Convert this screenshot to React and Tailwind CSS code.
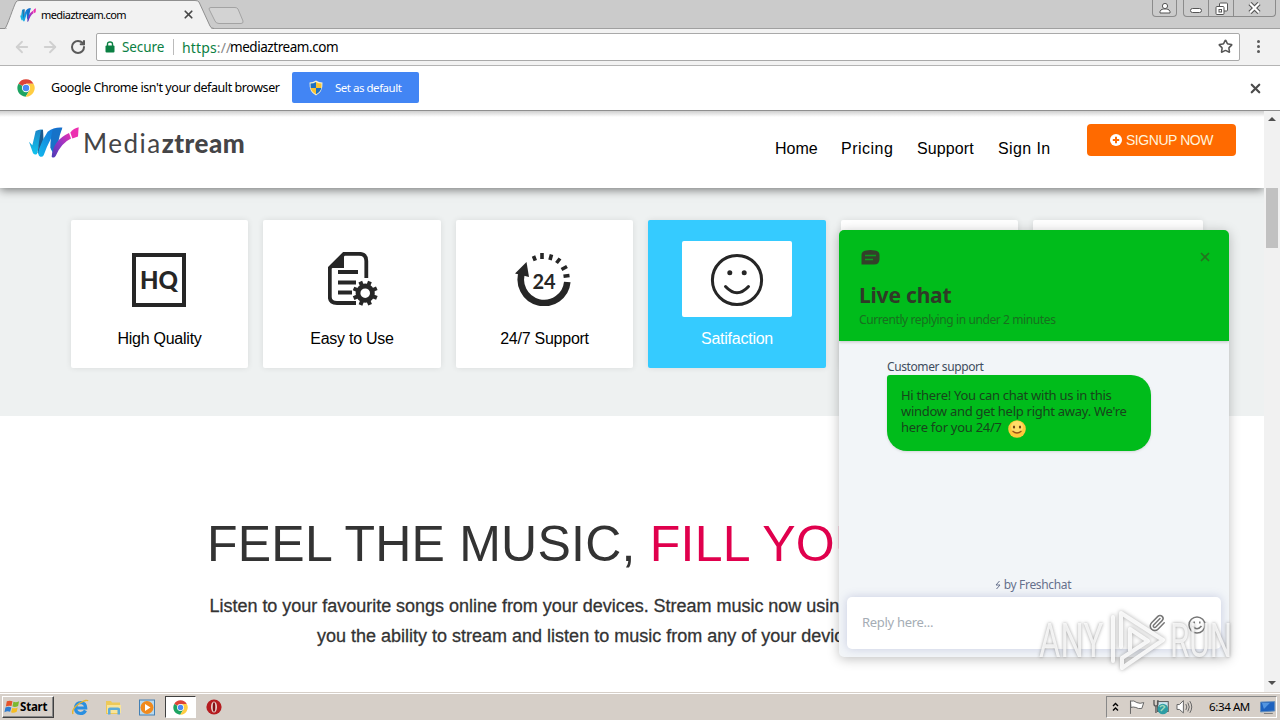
import React from 'react';
import { ArrowLeft, ArrowRight, RotateCw, Star, X, Paperclip } from 'lucide-react';

const ui = "font-['Noto_Sans','Open_Sans',sans-serif]";

function ChromeLogo({ size }) {
  return (
    <svg width={size} height={size} viewBox="0 0 48 48">
      <circle cx="24" cy="24" r="23" fill="#fff" />
      <path d="M24 24 L4 12.5 A23 23 0 0 1 44 12.5 L24 12.5 Z" fill="#dd4437" />
      <path d="M24 24 L4 12.5 A23 23 0 0 0 23 47 L34 29.5 Z" fill="#1da462" />
      <path d="M24 12.5 L44 12.5 A23 23 0 0 1 23 47 L34 29.5 Z" fill="#ffcd42" />
      <circle cx="24" cy="24" r="11" fill="#fff" />
      <circle cx="24" cy="24" r="8.6" fill="#4a8af4" />
    </svg>
  );
}

function BrandMark({ width, height }) {
  return (
    <svg width={width} height={height} viewBox="0 0 150 92" preserveAspectRatio="none">
      <defs>
        <linearGradient id="markCyan" x1="0" y1="0" x2="0" y2="1">
          <stop offset="0" stopColor="#1c86c8" />
          <stop offset="1" stopColor="#10c4ee" />
        </linearGradient>
        <linearGradient id="markBlue" x1="1" y1="0" x2="0" y2="1">
          <stop offset="0" stopColor="#1464d2" />
          <stop offset="1" stopColor="#12b8ee" />
        </linearGradient>
        <linearGradient id="markPink" x1="0" y1="1" x2="1" y2="0">
          <stop offset="0" stopColor="#4a3cb4" />
          <stop offset="0.5" stopColor="#9036c4" />
          <stop offset="1" stopColor="#ec30b0" />
        </linearGradient>
      </defs>
      <path d="M0 44 L10 54 Q16 30 20 12 Q30 6 42 8 Q34 40 24 80 Q14 86 10 72 Z" fill="url(#markCyan)" />
      <path d="M42 8 L44 44 L34 86 L26 76 Q30 40 36 10 Z" fill="#1b5a8e" />
      <path d="M34 88 Q24 84 30 66 Q40 36 56 14 Q76 0 100 2 Q84 30 72 78 L66 66 L66 34 Q52 60 44 84 Q40 90 34 88 Z" fill="url(#markBlue)" />
      <path d="M72 6 L100 2 Q92 22 88 44 L74 76 L64 62 Q64 30 72 6 Z" fill="#1672c8" />
      <path d="M68 88 Q72 40 120 18 L126 34 Q96 48 80 86 Q74 94 68 88 Z" fill="url(#markPink)" />
      <path d="M124 16 Q134 4 149 1 L147 28 L130 34 Z" fill="#ec2fb0" />
    </svg>
  );
}

function TabStrip() {
  return (
    <div className="relative flex h-[29px] shrink-0 items-center border-b border-[#a0a0a0] bg-[#cbcbcb]">
      <svg className="absolute left-0 top-0" width="250" height="29">
        <path d="M0 28.5 H5 C7 27 14 5 16 2 Q17 .5 19 .5 H195 Q198 .5 199 2 L210 26 Q211 28.5 214 28.5" fill="#f2f2f2" stroke="#8f8f8f" />
        <rect x="7" y="28" width="204" height="1" fill="#f2f2f2" />
        <path d="M209 9 Q209 7.5 211 7.5 H235 Q237 7.5 238 9 L243 21 Q243.500 23.500 241 23.500 H219 Q216 23.500 215 21 Z" fill="#d3d3d3" stroke="#a3a3a3" />
      </svg>
      <div className="relative ml-[20px] mt-px flex w-[175px] items-center">
        <BrandMark width={16} height={14} />
        <span className={`${ui} ml-[5px] text-[11px] leading-4 tracking-[-0.57px] text-black`}>mediaztream.com</span>
        <X size={13} strokeWidth={3.2} className="ml-auto text-[#484848]" />
      </div>
      <div className="ml-auto flex h-[17px] self-start">
        <div className="flex w-[25px] items-center justify-center rounded-b border border-t-0 border-[#8b8b8b]">
          <svg width="12" height="12" viewBox="0 0 12 12" fill="#fff" stroke="#555">
            <path d="M1 11 V9.500 Q1.500 7.500 4 7 H8 Q10.500 7.500 11 9.500 V11 Z" />
            <circle cx="6" cy="4" r="2.600" />
          </svg>
        </div>
        <div className="ml-[6px] mr-1 flex w-[93px] rounded-b border border-t-0 border-[#8b8b8b]">
          <div className="flex w-[25px] items-center justify-center border-r border-[#8b8b8b]">
            <div className="mt-1 h-[5px] w-[12px] rounded-sm border border-[#555] bg-white" />
          </div>
          <div className="flex w-[25px] items-center justify-center border-r border-[#8b8b8b]">
            <svg width="13" height="13" fill="#fff" stroke="#555">
              <rect x="4.500" y="1" width="8" height="8" rx="1" />
              <rect x="1" y="4.500" width="8" height="8" rx="1" />
              <rect x="4" y="7.500" width="2.500" height="2.500" />
            </svg>
          </div>
          <div className="flex flex-1 items-center justify-center">
            <svg width="13" height="12" fill="none">
              <path d="M2 1.500 L11 10.500 M11 1.500 L2 10.500" stroke="#555" strokeWidth="4.400" />
              <path d="M2 1.500 L11 10.500 M11 1.500 L2 10.500" stroke="#fff" strokeWidth="2.200" />
            </svg>
          </div>
        </div>
      </div>
    </div>
  );
}

function Toolbar() {
  return (
    <div className="flex h-[37px] shrink-0 items-center border-b border-[#b4b4b4] bg-[#f2f2f2] pb-px">
      <ArrowLeft size={18} strokeWidth={2.400} className="ml-[13px] text-[#d0d0d0]" />
      <ArrowRight size={18} strokeWidth={2.400} className="ml-[10px] text-[#d0d0d0]" />
      <RotateCw size={16} strokeWidth={3} className="ml-[11px] text-[#5a5a5a]" />
      <div className={`${ui} ml-[10px] flex h-[28px] w-[1144px] items-center rounded-[2px] border border-[#a9a9a9] bg-white`}>
        <svg className="ml-[8px]" width="10" height="12" viewBox="0 0 10 12">
          <rect x="0.500" y="4.500" width="9" height="7" rx="1" fill="#0b8043" />
          <path d="M2.500 5 V3 Q2.500 1 5 1 Q7.500 1 7.500 3 V5" fill="none" stroke="#0b8043" strokeWidth="1.400" />
        </svg>
        <span className="ml-[7px] mt-px w-[51px] text-[13.500px] tracking-[-0.1px] text-[#0b8043]">Secure</span>
        <span className="h-4 w-px bg-[#bbb]" />
        <span className="ml-[8px] mt-px w-[48px] whitespace-nowrap text-[14px] tracking-[0.15px] text-[#0b8043]">https<span className="text-[#888]">://</span></span>
        <span className="mt-px text-[13.500px] tracking-[-0.45px] text-black">mediaztream.com</span>
        <Star size={15} strokeWidth={2.500} className="ml-auto mr-[6px] text-[#555]" />
      </div>
      <div className="ml-[17px] flex flex-col gap-[2px]">
        <i className="h-[3px] w-[3px] rounded-full bg-[#5a5a5a]" />
        <i className="h-[3px] w-[3px] rounded-full bg-[#5a5a5a]" />
        <i className="h-[3px] w-[3px] rounded-full bg-[#5a5a5a]" />
      </div>
    </div>
  );
}

function InfoBar() {
  return (
    <div className={`${ui} flex h-[45px] shrink-0 items-center border-b border-[#8f8f8f] bg-white`}>
      <div className="ml-[17px] w-[34px]"><ChromeLogo size={18} /></div>
      <span className="w-[241px] whitespace-nowrap text-[12.500px] tracking-[-0.43px] text-black">Google Chrome isn't your default browser</span>
      <div className="mb-px flex h-[31px] w-[127px] items-center rounded-[2px] bg-[#4285f4] text-white">
        <svg className="ml-[17px]" width="14" height="16" viewBox="0 0 14 16">
          <path d="M7 .5 Q10 2.500 13.500 2.500 Q14 12 7 15.500 Q0 12 .5 2.500 Q4 2.500 7 .5" fill="#f5f0d0" />
          <path d="M7 2 V8 H1.700 L1.500 3.500 Q4.500 3.500 7 2 M7 8 H12.300 Q11.500 12 7 14.300 Z" fill="#1c6fc0" />
          <path d="M7 2 V8 H12.300 L12.500 3.500 Q9.500 3.500 7 2 M7 8 H1.700 Q2.500 12 7 14.300 Z" fill="#f8c332" />
        </svg>
        <span className="ml-[12px] whitespace-nowrap text-[11.500px] tracking-[-0.48px]">Set as default</span>
      </div>
      <X size={15} strokeWidth={3.500} className="ml-auto mr-[17px] text-[#4c4c4c]" />
    </div>
  );
}

function SiteHeader() {
  return (
    <header className="relative z-10 flex h-[77px] shrink-0 bg-white bg-linear-to-b from-[#cfcfcf] to-white to-[6px] shadow-[0_2px_9px_rgba(0,0,0,0.5)]">
      <div className="ml-[29px] mt-[16px] flex h-[32px] w-[746px] items-start">
        <BrandMark width={50} height={31} />
        <div className="ml-[4px] whitespace-nowrap font-['Lato',sans-serif] text-[26px] leading-8 text-[#454547]">
          <span className="tracking-[1.5px]">Media</span>
          <span className="font-black tracking-[0.5px]">ztream</span>
        </div>
      </div>
      <nav className="mt-[28px] flex h-5 w-[312px] whitespace-nowrap text-[16px] leading-5 text-black">
        <a className="w-[66px]">Home</a>
        <a className="w-[76px] tracking-[0.5px]">Pricing</a>
        <a className="w-[81px] tracking-[0.1px]">Support</a>
        <a className="tracking-[0.4px]">Sign In</a>
      </nav>
      <button className="mt-[13px] flex h-[32px] w-[149px] items-center justify-center gap-1 rounded-[4px] bg-[#ff6a00] text-[14px] text-[#fff3dc]">
        <svg width="12" height="12" viewBox="0 0 12 12">
          <circle cx="6" cy="6" r="6" fill="#fff" />
          <path d="M6 2.800 V9.200 M2.800 6 H9.200" stroke="#ff6a00" strokeWidth="2" />
        </svg>
        <span className="whitespace-nowrap tracking-[-0.45px]">SIGNUP NOW</span>
      </button>
    </header>
  );
}

function QualityIcon() {
  return (
    <svg className="mr-[2px] mt-px" width="54" height="54" viewBox="0 0 54 54">
      <rect x="2" y="2" width="50" height="50" fill="none" stroke="#262626" strokeWidth="4" />
      <text x="27" y="36" textAnchor="middle" fontFamily="Lato" fontWeight="900" fontSize="25" textLength="38" lengthAdjust="spacingAndGlyphs" fill="#262626">HQ</text>
    </svg>
  );
}

function DocumentIcon() {
  const teeth = [0, 45, 90, 135, 180, 225, 270, 315];
  return (
    <svg className="ml-[3px]" width="52" height="54" viewBox="0 0 52 54">
      <path d="M38.300 26 V9 Q38.300 1.800 31 1.800 H16 L1.800 16 V45 Q1.800 51 9 51 H28" fill="none" stroke="#262626" strokeWidth="3.800" />
      <path d="M16 1 V16 H1 Z" fill="#262626" />
      <path d="M10 20 H30 M10 30.500 H28 M10 40.500 H24" stroke="#262626" strokeWidth="3.800" />
      <circle cx="37.200" cy="41.200" r="7.200" fill="none" stroke="#262626" strokeWidth="4.800" />
      {teeth.map((a) => (
        <rect key={a} x="35.200" y="28.600" width="4" height="5" fill="#262626" transform={`rotate(${a + 22} 37.200 41.200)`} />
      ))}
    </svg>
  );
}

function ClockIcon() {
  return (
    <svg className="mr-[3px]" width="56" height="54" viewBox="0 0 56 54">
      <path d="M52.300 30 A23.300 23.300 0 1 1 7.500 19" fill="none" stroke="#262626" strokeWidth="6.600" />
      <path d="M11.500 10 L0 21.500 L14 25 Z" fill="#262626" />
      <path d="M18.500 4 L20.300 8.700 M27 1 V7 M36.500 2.500 L35 8 M45 6.500 L41.500 11 M52 14.500 L46.500 17.500 M54.500 23.500 L48.500 24.300" stroke="#262626" strokeWidth="3.600" />
      <text x="29" y="36.500" textAnchor="middle" fontFamily="Lato" fontWeight="700" fontSize="20" fill="#262626">24</text>
    </svg>
  );
}

function SmileIcon() {
  return (
    <svg className="mt-[2px]" width="54" height="54" viewBox="0 0 54 54">
      <circle cx="27" cy="27" r="24.600" fill="none" stroke="#262626" strokeWidth="3" />
      <circle cx="19.800" cy="19.700" r="2.500" fill="#262626" />
      <circle cx="34.200" cy="19.700" r="2.500" fill="#262626" />
      <path d="M15.500 33.500 Q27 46 38.500 33.500" fill="none" stroke="#262626" strokeWidth="3" strokeLinecap="round" />
    </svg>
  );
}

function Feature({ icon, label, active }) {
  return (
    <div className={`flex h-[148px] flex-col items-center rounded-[2px] pt-[21px] shadow-[0_0_6px_rgba(0,0,0,0.09)] ${active ? 'bg-[#35cbff] text-white' : 'bg-white text-black'}`}>
      <div className="flex h-[76px] w-[110px] items-center justify-center rounded-[2px] bg-white">{icon}</div>
      <p className="mt-[12px] whitespace-nowrap text-[16px] leading-5 tracking-[-0.25px]">{label}</p>
    </div>
  );
}

function Features() {
  return (
    <section className="grid h-[228px] shrink-0 grid-cols-[177px_178px_177px_178px_177px_170px] gap-[15px] bg-[#eef1f1] pl-[71px] pt-[32px]">
      <Feature icon={<QualityIcon />} label="High Quality" />
      <Feature icon={<DocumentIcon />} label="Easy to Use" />
      <Feature icon={<ClockIcon />} label="24/7 Support" />
      <Feature icon={<SmileIcon />} label="Satifaction" active />
      <Feature />
      <Feature />
    </section>
  );
}

function Hero() {
  return (
    <section className="flex-1 overflow-hidden bg-white pt-[99px] text-[#333]">
      <h1 className="ml-[207px] whitespace-nowrap text-[50px] leading-[58px] tracking-[0.24px]">
        FEEL THE MUSIC, <span className="text-[#e0004d]">FILL YOUR LIFE</span>
      </h1>
      <div className="mt-[18px] whitespace-nowrap text-[18px] leading-[30px] [-webkit-text-stroke:0.3px_#333]">
        <p className="ml-[209.500px] tracking-[-0.02px]">Listen to your favourite songs online from your devices. Stream music now using</p>
        <p className="ml-[317px]">you the ability to stream and listen to music from any of your devices</p>
      </div>
    </section>
  );
}

function ChatWidget() {
  return (
    <aside className={`${ui} absolute left-[839px] top-[119px] z-20 flex h-[427px] w-[390px] flex-col overflow-hidden rounded-[5px] bg-[#f2f5f8] shadow-[0_2px_12px_rgba(0,0,0,0.25)]`}>
      <div className="h-[111px] shrink-0 bg-[#00bc1b] pl-[20px] pr-[17px] pt-[20px] shadow-[0_1px_3px_rgba(0,0,0,0.2)]">
        <div className="flex h-[15px] items-center justify-between">
          <svg className="ml-[2px]" width="19" height="15" viewBox="0 0 19 15">
            <path d="M5 .5 Q9.500 -.3 14 .5 Q18.500 1 18.500 5 V9 Q18.500 14.500 13 14.500 H.5 V5 Q.5 1 5 .5" fill="#33402a" />
            <path d="M4 5.500 H15 M4 9.500 H12" stroke="#0b9a1c" strokeWidth="1.500" />
          </svg>
          <X size={14} strokeWidth={3} className="mb-[2px] text-[#24731f]" />
        </div>
        <h2 className="mt-[15px] text-[21px] font-bold leading-[30px] tracking-[-0.2px] text-[#2f3a27]">Live chat</h2>
        <p className="mt-[2px] whitespace-nowrap text-[12px] leading-[16px] tracking-[-0.4px] text-[#18701f]">Currently replying in under 2 minutes</p>
      </div>
      <p className="ml-[48px] mt-[18px] text-[12px] leading-4 tracking-[-0.4px] text-[#3f4d5e]">Customer support</p>
      <div className="ml-[48px] h-[76px] w-[264px] whitespace-nowrap rounded-[20px] rounded-tl-[3px] bg-[#00bc1b] pl-[14px] pt-[12px] text-[13px] leading-[16px] tracking-[-0.27px] text-[#17451b] shadow-sm">
        <p>Hi there! You can chat with us in this</p>
        <p>window and get help right away. We're</p>
        <div className="flex">
          here for you 24/7
          <svg className="ml-[6px] mt-px" width="18" height="18" viewBox="0 0 18 18">
            <circle cx="9" cy="9" r="8.800" fill="#ffc83c" />
            <circle cx="9" cy="7" r="6" fill="#ffdc68" />
            <ellipse cx="6" cy="7" rx="1.100" ry="1.500" fill="#6b3f12" />
            <ellipse cx="12" cy="7" rx="1.100" ry="1.500" fill="#6b3f12" />
            <path d="M4.500 11 Q9 15 13.500 11" fill="none" stroke="#9b5516" strokeWidth="1.200" />
          </svg>
        </div>
      </div>
      <div className="mt-auto flex h-4 items-center justify-center pr-[2px] text-[12px] leading-4 tracking-[-0.33px] text-[#66708c]">
        <svg className="mr-[3px]" width="6" height="10" fill="none" stroke="#66708c"><path d="M4.500 1 L1 5 H5 L1.500 9" /></svg>
        by Freshchat
      </div>
      <div className="mx-[8px] mb-[8px] mt-[4px] flex h-[52px] items-center rounded-[5px] bg-white pl-[15px] pr-[15px] text-[13px] tracking-[-0.3px] text-[#a5adb5] shadow-[0_0_10px_rgba(90,100,170,0.28)]">
        Reply here...
        <Paperclip size={18} strokeWidth={2} className="ml-auto text-[#777]" />
        <svg className="ml-[22px] mt-[3px]" width="18" height="18" viewBox="0 0 18 18" fill="none" stroke="#777" strokeWidth="1.500">
          <circle cx="9" cy="9" r="8" />
          <path d="M4.500 10 Q9 15.500 13.500 10 M6.200 5.500 V7.500 M11.800 5.500 V7.500" />
        </svg>
      </div>
    </aside>
  );
}

function Watermark() {
  return (
    <div className="absolute left-[1039px] top-[498px] z-30 flex h-[64px] w-[196px] items-center font-['Roboto',sans-serif] text-[49px] leading-[64px] text-white/80 [text-shadow:0_0_4px_rgba(90,90,90,0.6)]">
      <span className="w-[70px] origin-left scale-x-[0.67]">ANY</span>
      <svg className="shrink-0 drop-shadow-[0_0_2px_rgba(90,90,90,0.6)]" width="58" height="64" viewBox="0 0 58 64" fill="none" stroke="#fff" strokeOpacity="0.85" strokeWidth="4" strokeLinejoin="round" strokeLinecap="round">
        <path d="M12 38 V4 L54 31 L13 59 V49 L39 32 L21 20 V42" />
        <path d="M4 8 V52" />
      </svg>
      <span className="ml-[3px] origin-left scale-x-[0.64]">RUN</span>
    </div>
  );
}

function Scrollbar() {
  return (
    <div className="flex w-[16px] shrink-0 flex-col items-center bg-[#f1f1f1]">
      <i className="mt-[6px] border-x-4 border-b-4 border-x-transparent border-b-[#505050]" />
      <i className="mt-[67px] h-[60px] w-[12px] bg-[#c1c1c1]" />
      <i className="mb-[7px] mt-auto border-x-4 border-t-4 border-x-transparent border-t-[#505050]" />
    </div>
  );
}

function Taskbar() {
  return (
    <div className={`${ui} flex h-[28px] shrink-0 items-center border-t border-[#d6cfc8] bg-[#d6cfc8] pt-px shadow-[inset_0_1px_0_#fff] text-[11.500px] text-black`}>
      <div className="ml-[2px] flex h-[22px] w-[52px] items-center border border-b-[#404040] border-l-white border-r-[#404040] border-t-white pl-px shadow-[inset_-1px_-1px_0_#888]">
        <svg width="16" height="16" viewBox="0 0 17 16">
          <path d="M3 2 Q6 .5 9 2 L8 7 Q5 6 2 7.500 Z" fill="#e5532a" />
          <path d="M10 2.500 Q13 3.500 16 2 L15 7 Q12 8.500 9 7.500 Z" fill="#7cb82f" />
          <path d="M1.500 8.500 Q5 7 7.800 8.500 L6.500 13 Q3.500 12 .5 13.500 Z" fill="#2e7cd0" />
          <path d="M8.800 9 Q12 10 14.500 8.500 L13.500 13 Q10 15 7.500 13.500 Z" fill="#f6bd22" />
        </svg>
        <b className="tracking-[-0.2px]">Start</b>
      </div>
      <svg className="ml-[18px]" width="17" height="17" viewBox="0 0 17 17" fill="none">
        <path d="M13.500 11.500 Q12 14.500 8.500 14.500 Q3.500 14 3.500 9 Q4 3.500 9 3.500 Q13.500 4 13.700 9 H5" stroke="#2a8fe0" strokeWidth="3.200" />
        <path d="M1 15 Q-1 10 8 4 Q15 0 16 2" stroke="#e8b52c" strokeWidth="1.400" />
      </svg>
      <svg className="ml-[16px]" width="17" height="17" viewBox="0 0 17 17">
        <path d="M1 2 H6 L7 3.500 H15 V15 H1 Z" fill="#edc959" />
        <path d="M2 6 H16 V14 H2 Z" fill="#f8e49a" />
        <path d="M3 15.500 V10 Q3 8.500 5 8.500 H13 Q15 8.500 15 10 V15.500 H12.500 V11 H5.500 V15.500 Z" fill="#5cabd9" />
      </svg>
      <svg className="ml-[17px]" width="16" height="17" viewBox="0 0 16 17">
        <rect x=".5" y="1" width="15" height="15" fill="#b9d9ee" stroke="#4480b4" />
        <circle cx="8" cy="8.500" r="6.500" fill="#f08a1d" />
        <path d="M6 5 L11.500 8.500 L6 12 Z" fill="#fff" />
      </svg>
      <div className="ml-[10px] flex h-[22px] w-[31px] items-center justify-center border border-b-white border-l-[#404040] border-r-white border-t-[#404040] bg-white">
        <ChromeLogo size={15} />
      </div>
      <svg className="ml-[10px]" width="16" height="16" viewBox="0 0 16 16">
        <circle cx="8" cy="8" r="7.600" fill="#b51c20" />
        <ellipse cx="8" cy="8" rx="3" ry="5.600" fill="#e9d5d0" />
        <ellipse cx="8" cy="8" rx="1.300" ry="4.800" fill="#831015" />
      </svg>
      <div className="ml-auto mr-[3px] flex h-[22px] w-[171px] items-center border border-b-white border-l-[#888] border-r-white border-t-[#888]">
        <svg className="ml-[5px]" width="7" height="10" fill="none" stroke="#000" strokeWidth="1.400"><path d="M1 4 L3.500 1.500 L6 4 M1 8.500 L3.500 6 L6 8.500" /></svg>
        <svg className="ml-[10px]" width="16" height="16" viewBox="0 0 16 16" fill="#fff" stroke="#666">
          <path d="M1.500 15 V1.500 M1.500 2 Q5 1 8 3.500 Q11 5 15 3.500 L13 9.500 Q9 10 7 8.500 Q4 7.500 2 8.500 Z" />
        </svg>
        <svg className="ml-[8px]" width="17" height="16" viewBox="0 0 17 16">
          <rect x="4.500" y="2.500" width="11" height="10" fill="#cde6f0" stroke="#555" />
          <path d="M1 1 V5 Q1 7 3 7 V14 M5 1 V5 Q5 7 3 7" fill="none" stroke="#555" strokeWidth="1.300" />
          <circle cx="10" cy="10" r="5.400" fill="#2c9da4" />
          <path d="M7 8 Q10 5 12 8 Q10 10 8 12" fill="none" stroke="#9fd7b8" strokeWidth="1.500" />
        </svg>
        <svg className="ml-[7px]" width="17" height="16" viewBox="0 0 17 16" fill="none" stroke="#666">
          <path d="M1 5.500 H3.500 L7.500 1.500 V14 L3.500 10.500 H1 Z" fill="#fff" />
          <path d="M10 5 Q12 8 10 11 M12 3.500 Q15 8 12 12.500 M14 2 Q18 8 14 14" />
        </svg>
        <span className="ml-[16px] w-[52px] whitespace-nowrap tracking-[-0.4px]">6:34 AM</span>
        <svg width="16" height="15" viewBox="0 0 16 15">
          <path d="M.5 2 L15 1.500 V11 L.5 12 Z" fill="#1d62bf" stroke="#6790bd" />
          <path d="M2 3 L10 3 L4 9 Z" fill="#5295e0" />
          <path d="M4 13.500 H13" stroke="#777" />
        </svg>
      </div>
    </div>
  );
}

export default function App() {
  return (
    <div className="flex h-[720px] w-[1280px] flex-col overflow-hidden bg-white font-['Liberation_Sans',Arial,sans-serif]">
      <TabStrip />
      <Toolbar />
      <InfoBar />
      <main className="relative flex h-[581px] shrink-0 overflow-hidden">
        <div className="flex w-[1264px] flex-col overflow-hidden">
          <SiteHeader />
          <Features />
          <Hero />
        </div>
        <Scrollbar />
        <ChatWidget />
        <Watermark />
      </main>
      <Taskbar />
    </div>
  );
}
